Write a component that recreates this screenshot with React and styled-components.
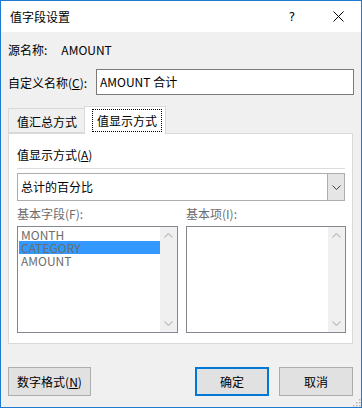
import React from "react";
import styled, { createGlobalStyle } from "styled-components";

const GlobalStyle = createGlobalStyle`
  html, body {
    margin: 0;
    padding: 0;
    background: #ffffff;
  }
  * {
    box-sizing: border-box;
  }
`;

const FONT = `"Noto Sans CJK SC", "Noto Sans", sans-serif`;

function App() {
  return (
    <>
      <GlobalStyle />
      <Window>
        <TitleBar>
          <Title>值字段设置</Title>
          <CaptionButton>?</CaptionButton>
          <CaptionButton>
            <svg width="11" height="11" viewBox="0 0 11 11">
              <path d="M0.5 0.5 L10.5 10.5 M10.5 0.5 L0.5 10.5" stroke="#000" strokeWidth="1" />
            </svg>
          </CaptionButton>
        </TitleBar>

        <Body>
          <SourceRow>
            <span>源名称:</span>
            <SourceValue>AMOUNT</SourceValue>
          </SourceRow>

          <NameRow>
            <NameLabel>
              自定义名称(<u>C</u>):
            </NameLabel>
            <TextBox>AMOUNT 合计</TextBox>
          </NameRow>

          <TabStrip>
            <Tab>值汇总方式</Tab>
            <Tab $active>
              <Focus>值显示方式</Focus>
            </Tab>
          </TabStrip>

          <Panel>
            <GroupLabel>
              值显示方式(<u>A</u>)
            </GroupLabel>
            <Separator />
            <Combo>
              <ComboText>总计的百分比</ComboText>
              <ComboButton>
                <svg width="9" height="5" viewBox="0 0 9 5">
                  <path d="M0.5 0.5 L4.5 4.5 L8.5 0.5" stroke="#404040" strokeWidth="1" fill="none" />
                </svg>
              </ComboButton>
            </Combo>

            <ListsGrid>
              <DimLabel>基本字段(F):</DimLabel>
              <DimLabel>基本项(I):</DimLabel>
              <ListBox>
                <Items>
                  <Item>MONTH</Item>
                  <Item $selected>CATEGORY</Item>
                  <Item>AMOUNT</Item>
                </Items>
                <ScrollBar />
              </ListBox>
              <ListBox>
                <Items />
                <ScrollBar />
              </ListBox>
            </ListsGrid>
          </Panel>

          <ButtonRow>
            <Button $width={83}>
              数字格式(<u>N</u>)
            </Button>
            <Spacer />
            <Button $width={74} $default>
              确定
            </Button>
            <Button $width={74}>取消</Button>
          </ButtonRow>
        </Body>

        <Grip width="10" height="10" viewBox="0 0 10 10">
          {[
            [8, 2], [8, 5], [5, 5], [8, 8], [5, 8], [2, 8],
          ].map(([x, y]) => (
            <rect key={`${x}-${y}`} x={x} y={y} width="1.5" height="1.5" fill="#b8b8b8" />
          ))}
        </Grip>
      </Window>
    </>
  );
}

function ScrollBar() {
  return (
    <Scroll>
      <Arrow>
        <svg width="9" height="5" viewBox="0 0 9 5">
          <path d="M0.5 4.5 L4.5 0.5 L8.5 4.5" stroke="#c2c2c2" strokeWidth="1.3" fill="none" />
        </svg>
      </Arrow>
      <Arrow>
        <svg width="9" height="5" viewBox="0 0 9 5">
          <path d="M0.5 0.5 L4.5 4.5 L8.5 0.5" stroke="#c2c2c2" strokeWidth="1.3" fill="none" />
        </svg>
      </Arrow>
    </Scroll>
  );
}

const Window = styled.div`
  position: relative;
  width: 362px;
  height: 408px;
  border: 1px solid #1c7ad0;
  background: #f0f0f0;
  font-family: ${FONT};
  font-size: 12px;
  color: #000;
  display: flex;
  flex-direction: column;
  overflow: hidden;
`;

const TitleBar = styled.div`
  height: 31px;
  background: #ffffff;
  display: flex;
  align-items: center;
  padding-left: 9px;
  flex-shrink: 0;
`;

const Title = styled.div`
  flex: 1;
  font-size: 12px;
  line-height: 16px;
  padding-top: 1px;
`;

const CaptionButton = styled.div`
  width: 46px;
  height: 31px;
  display: flex;
  align-items: center;
  justify-content: center;
  font-family: "DejaVu Sans", sans-serif;
  font-size: 12px;
`;

const Body = styled.div`
  flex: 1;
  padding: 0 8px 0 7px;
  display: flex;
  flex-direction: column;
`;

const SourceRow = styled.div`
  margin-top: 10px;
  height: 16px;
  line-height: 16px;
  display: flex;
`;

const SourceValue = styled.span`
  margin-left: 14px;
`;

const NameRow = styled.div`
  margin-top: 11px;
  height: 26px;
  display: flex;
  align-items: center;
`;

const NameLabel = styled.div`
  width: 88px;
  line-height: 16px;
  flex-shrink: 0;
  padding-top: 1px;
`;

const TextBox = styled.div`
  width: 258px;
  height: 26px;
  flex-shrink: 0;
  background: #ffffff;
  border: 1px solid #7a7a7a;
  padding-left: 3px;
  line-height: 24px;
`;

const TabStrip = styled.div`
  margin-top: 11px;
  height: 27px;
  display: flex;
  align-items: flex-end;
  position: relative;
  z-index: 1;
`;

const Tab = styled.div`
  width: ${({ $active }) => ($active ? "82px" : "78px")};
  height: ${({ $active }) => ($active ? "28px" : "25px")};
  margin-left: ${({ $active }) => ($active ? "-2px" : "0")};
  margin-bottom: ${({ $active }) => ($active ? "-1px" : "0")};
  background: ${({ $active }) => ($active ? "#ffffff" : "#f0f0f0")};
  border: 1px solid #d9d9d9;
  border-bottom: ${({ $active }) => ($active ? "none" : "1px solid #d9d9d9")};
  display: flex;
  align-items: center;
  justify-content: center;
  line-height: 16px;
  padding-top: ${({ $active }) => ($active ? "0" : "2px")};
  padding-bottom: ${({ $active }) => ($active ? "1px" : "0")};
`;

const Focus = styled.span`
  outline: 1px dotted #000;
  padding: 3px 4px 2px;
  margin-left: 4px;
`;

const Panel = styled.div`
  height: 211px;
  background: #ffffff;
  border: 1px solid #d9d9d9;
  padding: 13px 7px 0 8px;
  display: flex;
  flex-direction: column;
`;

const GroupLabel = styled.div`
  height: 16px;
  line-height: 16px;
`;

const Separator = styled.div`
  margin-top: 5px;
  height: 1px;
  background: #dcdcdc;
  width: 328px;
`;

const Combo = styled.div`
  margin-top: 4px;
  width: 328px;
  height: 28px;
  border: 1px solid #adadad;
  display: flex;
`;

const ComboText = styled.div`
  flex: 1;
  padding-left: 3px;
  line-height: 26px;
`;

const ComboButton = styled.div`
  width: 17px;
  background: #e5e5e5;
  border-left: 1px solid #adadad;
  display: flex;
  align-items: center;
  justify-content: center;
`;

const ListsGrid = styled.div`
  margin-top: 5px;
  display: grid;
  grid-template-columns: 161px 160px;
  grid-template-rows: 16px 107px;
  column-gap: 8px;
  row-gap: 4px;
`;

const DimLabel = styled.div`
  color: #6d6d6d;
  line-height: 16px;
`;

const ListBox = styled.div`
  border: 1px solid #828790;
  background: #ffffff;
  display: flex;
  padding: 1px 0 1px 1px;
`;

const Items = styled.div`
  flex: 1;
`;

const Item = styled.div`
  height: 13px;
  line-height: 13px;
  padding-left: 2px;
  color: #6d6d6d;
  background: ${({ $selected }) => ($selected ? "#3399ff" : "transparent")};
`;

const Scroll = styled.div`
  width: 17px;
  margin-top: -1px;
  margin-bottom: -1px;
  background: #f0f0f0;
  display: flex;
  flex-direction: column;
  justify-content: space-between;
`;

const Arrow = styled.div`
  height: 17px;
  display: flex;
  align-items: center;
  justify-content: center;
`;

const ButtonRow = styled.div`
  margin-top: 23px;
  display: flex;
  gap: 10px;
`;

const Spacer = styled.div`
  flex: 1;
`;

const Button = styled.div`
  width: ${({ $width }) => $width}px;
  height: 29px;
  background: #e1e1e1;
  border: ${({ $default }) => ($default ? "2px solid #0078d7" : "1px solid #adadad")};
  display: flex;
  align-items: center;
  justify-content: center;
  line-height: 16px;
`;

const Grip = styled.svg`
  position: absolute;
  right: 0;
  bottom: 0;
`;

export default App;
